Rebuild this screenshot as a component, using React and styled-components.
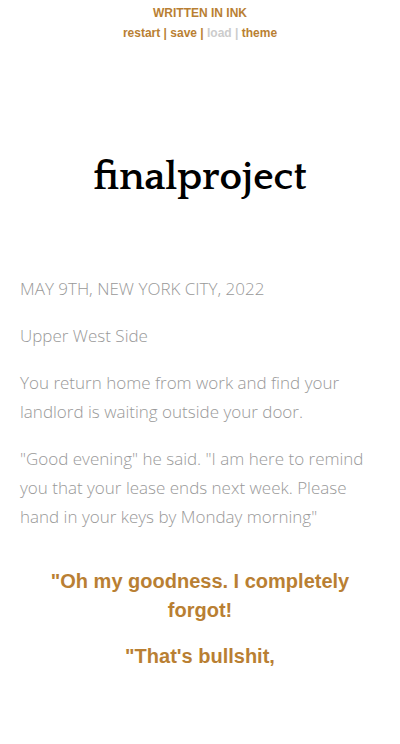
import styled, { createGlobalStyle } from 'styled-components';

const GlobalStyle = createGlobalStyle`
  html, body {
    margin: 0;
    padding: 0;
    background: #fff;
  }
  body {
    font-family: "Open Sans", sans-serif;
    font-weight: 300;
  }
`;

const Page = styled.div`
  width: 100%;
  min-height: 744px;
  background: #fff;
`;

const Header = styled.div`
  display: flex;
  flex-direction: column;
  align-items: center;
  padding-top: 6px;
  gap: 6px;
`;

const Credit = styled.span`
  font-family: "Liberation Sans", Arial, sans-serif;
  font-size: 12px;
  line-height: 14px;
  font-weight: 700;
  color: #b97f33;
`;

const Controls = styled.div`
  font-family: "Liberation Sans", Arial, sans-serif;
  font-size: 12px;
  line-height: 14px;
  font-weight: 700;
  color: #b97f33;
`;

const ControlLink = styled.span`
  color: ${props => (props.disabled ? '#ccc' : '#b97f33')};
`;

const Sep = styled.span`
  color: ${props => (props.faded ? '#ccc' : '#b97f33')};
`;

const Story = styled.div`
  max-width: 600px;
  margin: 0 auto;
  padding: 113px 20px 60px;
`;

const Title = styled.h1`
  margin: 0 0 73px;
  text-align: center;
  font-family: "Quattrocento", Georgia, "Liberation Serif", serif;
  font-size: 40px;
  line-height: 48px;
  font-weight: 700;
  color: #000;
`;

const Para = styled.p`
  margin: 0 0 18px;
  font-size: 17px;
  line-height: 29px;
  font-weight: 300;
  color: #999;
`;

const Choice = styled.p`
  margin: ${props => (props.first ? '36px' : '17px')} 0 0;
  text-align: center;
  line-height: 29px;
  font-family: "Liberation Sans", Arial, sans-serif;
  font-size: 20px;
  font-weight: 700;
  color: #b97f33;
`;

export default function App() {
  return (
    <Page>
      <GlobalStyle />
      <Header>
        <Credit>WRITTEN IN INK</Credit>
        <Controls>
          <ControlLink>restart</ControlLink>
          <Sep> | </Sep>
          <ControlLink>save</ControlLink>
          <Sep> | </Sep>
          <ControlLink disabled>load</ControlLink>
          <Sep faded> | </Sep>
          <ControlLink>theme</ControlLink>
        </Controls>
      </Header>
      <Story>
        <Title>finalproject</Title>
        <Para>MAY 9TH, NEW YORK CITY, 2022</Para>
        <Para>Upper West Side</Para>
        <Para>You return home from work and find your landlord is waiting outside your door.</Para>
        <Para>"Good evening" he said. "I am here to remind you that your lease ends next week. Please hand in your keys by Monday morning"</Para>
        <Choice first>"Oh my goodness. I completely forgot!</Choice>
        <Choice>"That's bullshit,</Choice>
      </Story>
    </Page>
  );
}
